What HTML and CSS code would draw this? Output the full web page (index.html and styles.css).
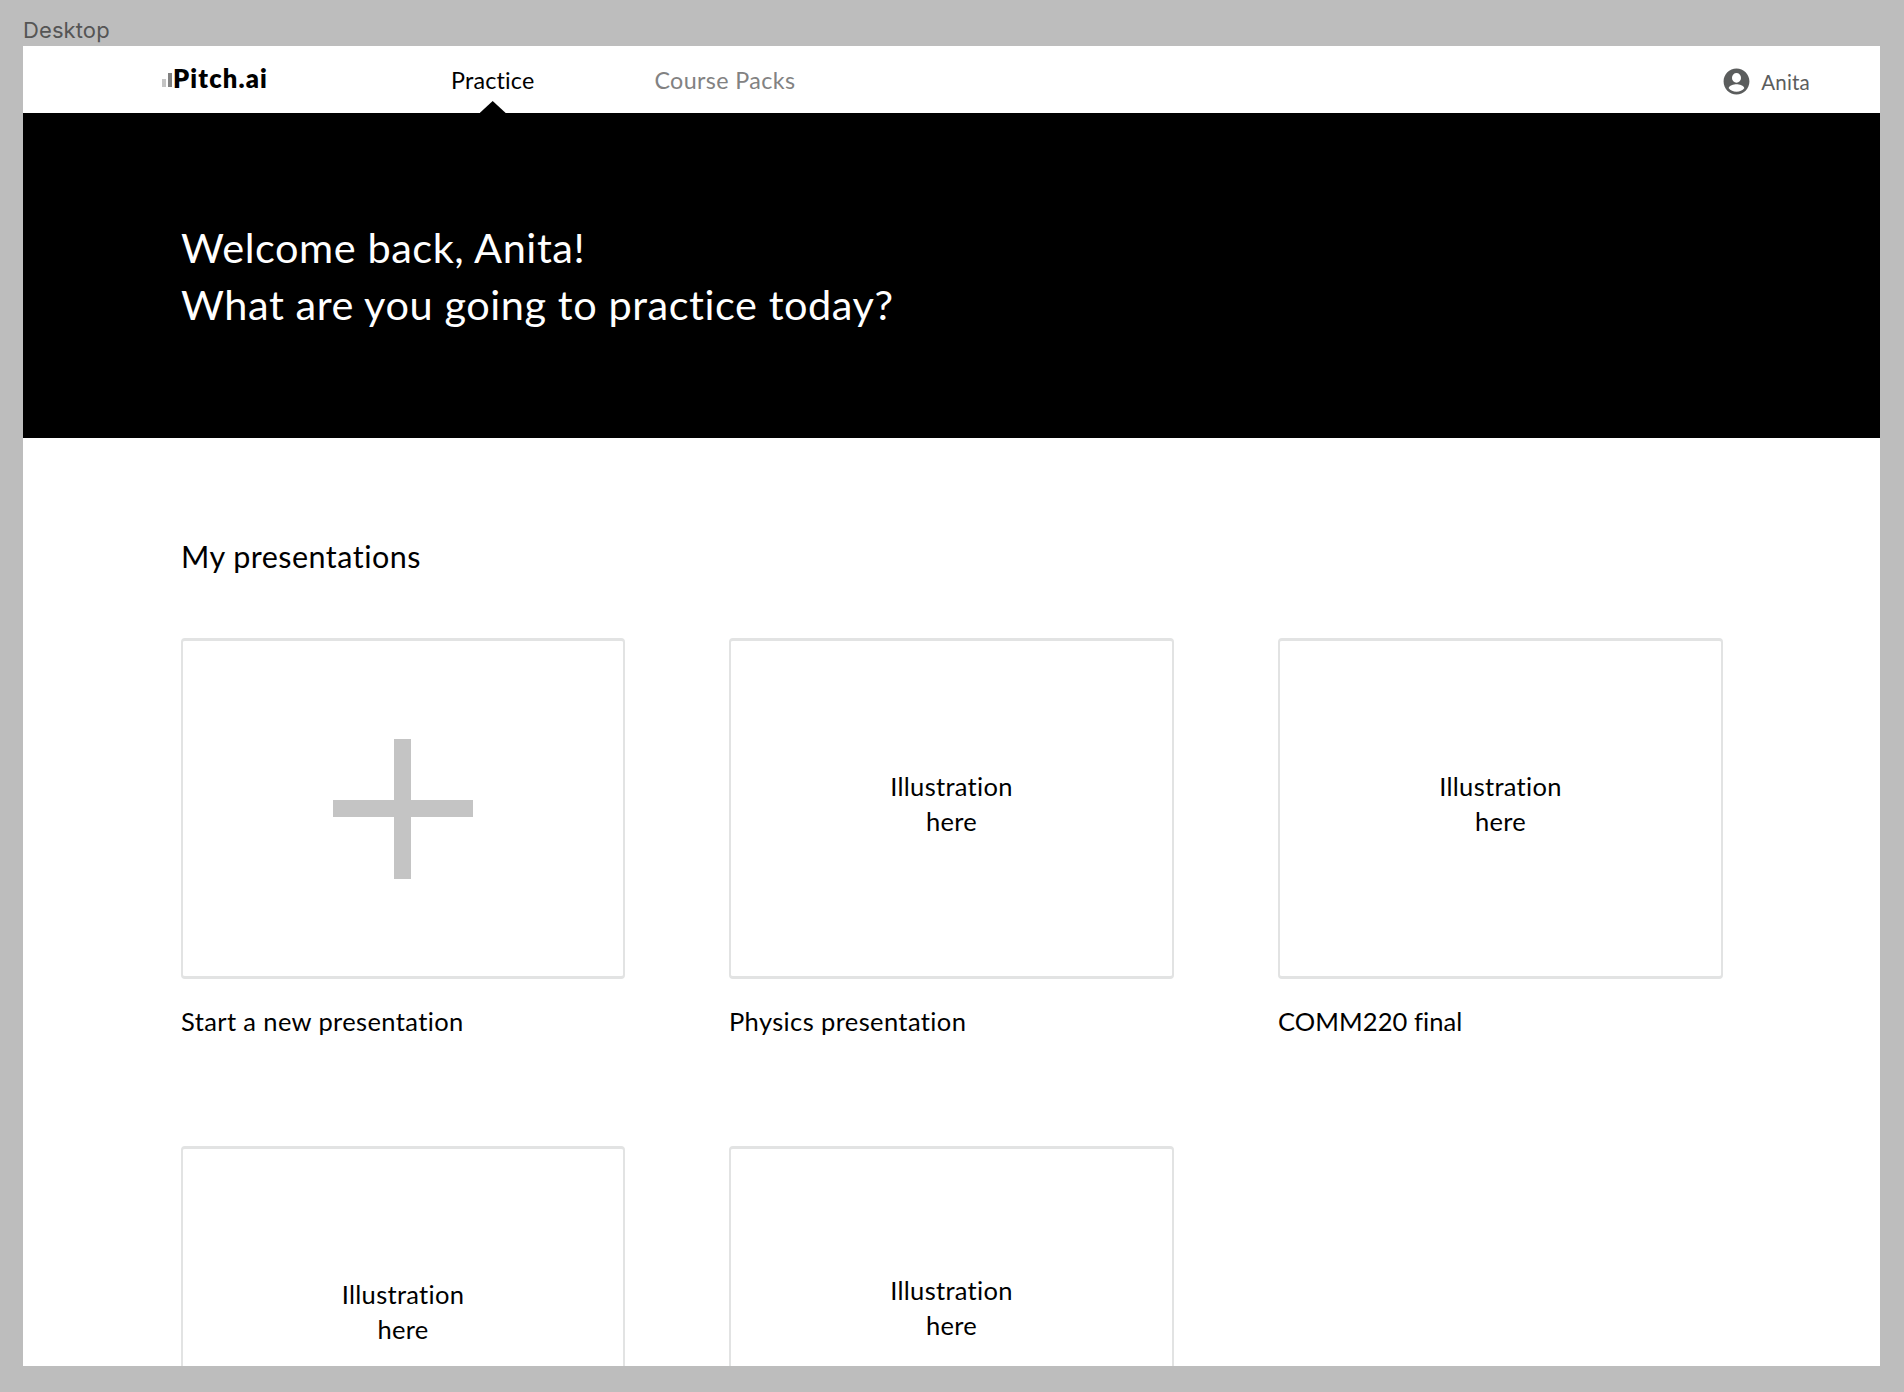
FILE: index.html
```html
<!DOCTYPE html>
<html lang="en">
<head>
<meta charset="utf-8">
<title>Pitch.ai</title>
<link rel="stylesheet" href="styles.css">
</head>
<body>
<div class="frame-label">Desktop</div>
<div class="frame">
  <header class="header">
    <a class="logo">
      <svg class="logo-bars" width="12" height="18" viewBox="0 0 12 18"><rect x="0" y="10" width="4" height="8" fill="#c4c4c4"/><rect x="6" y="4" width="4" height="14" fill="#828282"/></svg>
      <span>Pitch.ai</span>
    </a>
    <nav class="nav">
      <a class="nav-item active">Practice</a>
      <a class="nav-item wide">Course Packs</a>
    </nav>
    <a class="user">
      <svg width="31" height="31" viewBox="0 0 24 24"><path fill="#5b5d5d" d="M12 2C6.480 2 2 6.480 2 12s4.480 10 10 10 10-4.480 10-10S17.520 2 12 2zm0 3.500a3.500 3.700 0 0 1 0 7.400a3.500 3.700 0 0 1 0-7.400zm0 14.500c-2.500 0-4.710-.980-6-2.720.030-1.990 4-3.080 6-3.080s5.970 1.090 6 3.080c-1.290 1.740-3.500 2.720-6 2.720z"/></svg>
      <span>Anita</span>
    </a>
  </header>
  <section class="hero">
    <h1>Welcome back, Anita!<br>What are you going to practice today?</h1>
  </section>
  <main class="content">
    <h2>My presentations</h2>
    <div class="grid">
      <article><div class="card"><div class="plus"></div></div><p class="title">Start a new presentation</p></article>
      <article><div class="card"><p class="art">Illustration<br>here</p></div><p class="title">Physics presentation</p></article>
      <article><div class="card"><p class="art">Illustration<br>here</p></div><p class="title compact">COMM220 final</p></article>
      <article><div class="card"><p class="art">Illustration<br>here</p></div></article>
      <article><div class="card raised"><p class="art">Illustration<br>here</p></div></article>
    </div>
  </main>
</div>
</body>
</html>
```
FILE: styles.css
```css
* { box-sizing: border-box; }
body { margin: 0; height: 1392px; overflow: hidden; background: #bdbdbd; font-family: Lato, sans-serif; font-variant-ligatures: none; color: #000; }
h1, h2, p { margin: 0; font-weight: 400; }

.frame-label { height: 46px; padding: 17px 0 0 23px; font: 22px/27px Inter, sans-serif; letter-spacing: 0.100px; color: #555; }
.frame { width: 1857px; height: 1320px; margin-left: 23px; background: #fff; overflow: hidden; }

.header { display: flex; align-items: center; height: 67px; padding: 0 70px 0 139px; }
.logo { display: flex; align-items: center; width: 289px; padding-bottom: 3px; font-size: 25.500px; font-weight: 800; letter-spacing: 1.150px; }
.logo-bars { margin-right: -1px; }
.nav { display: flex; gap: 120px; height: 67px; }
.nav-item { position: relative; display: flex; align-items: center; padding-top: 1px; font-size: 23.300px; letter-spacing: 0.180px; color: #828282; }
.nav-item.wide { letter-spacing: 0.380px; }
.nav-item.active { color: #000; }
.nav-item.active::after { content: ""; position: absolute; left: 50%; bottom: 0; width: 26px; height: 12px; margin-left: -13px; background: #000; clip-path: polygon(50% 0, 100% 100%, 0 100%); }
.user { display: flex; align-items: center; gap: 9px; margin-left: auto; padding-top: 4px; font-size: 20.500px; letter-spacing: 0.200px; color: #5b5d5d; }

.hero { height: 325px; padding: 106px 0 0 158px; background: #000; color: #fff; }
.hero h1 { font-size: 41.500px; line-height: 56.500px; letter-spacing: 0.550px; }

.content { padding: 100px 158px 0; }
.content h2 { margin-bottom: 64px; font-size: 30.500px; line-height: 36px; letter-spacing: 0.480px; }
.grid { display: grid; grid-template-columns: 444px 445px 445px; column-gap: 104px; row-gap: 107px; }
.card { display: flex; align-items: center; justify-content: center; height: 341px; border: solid #e2e3e3; border-width: 3px 2px; border-radius: 4px; padding-bottom: 10px; }
.card.raised { padding-bottom: 17px; }
.art { text-align: center; font-size: 25.500px; line-height: 35px; letter-spacing: 0.300px; }
.title { margin-top: 24px; font-size: 25.500px; line-height: 36px; letter-spacing: 0.380px; }
.title.compact { letter-spacing: 0.080px; }
.plus { width: 140px; height: 140px; margin: 10px 1px 0 0; background: linear-gradient(#c4c4c4, #c4c4c4) center / 17px 100% no-repeat, linear-gradient(#c4c4c4, #c4c4c4) center / 100% 17px no-repeat; }
```
